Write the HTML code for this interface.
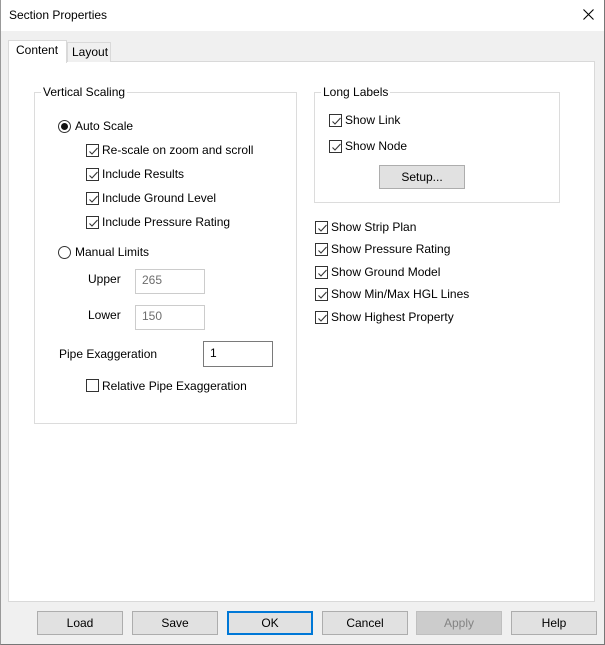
<!DOCTYPE html>
<html><head><style>
*{box-sizing:border-box}
body{margin:0;width:605px;height:645px;background:#f0f0f0;font-family:"Liberation Sans",sans-serif;font-size:12px;color:#000;position:relative;overflow:hidden}
.a{position:absolute;white-space:nowrap}
.win{position:absolute;left:0;top:0;width:605px;height:645px;border:1px solid #777;border-top:none;border-left:1px solid #999}
.title{position:absolute;left:0;top:0;width:604px;height:31px;background:#fff}
.panel{position:absolute;left:8px;top:61px;width:587px;height:541px;background:#fff;border:1px solid #d9d9d9}
.grp{position:absolute;border:1px solid #dcdcdc}
.lg{position:absolute;background:#fff;padding:0 2px;top:-8px;left:6px}
.cb{position:absolute;width:13px;height:13px;border:1px solid #333;background:#fff}
.cb svg{position:absolute;left:1px;top:1px}
.rb{position:absolute;width:13px;height:13px;border:1px solid #333;border-radius:50%;background:#fff}
.in{position:absolute;border:1px solid #ccc;background:#fff;color:#6d6d6d;padding:3px 0 0 6px}
.btn{position:absolute;top:611px;width:86px;height:24px;background:#e1e1e1;border:1px solid #adadad;text-align:center;line-height:22px}
</style></head><body>
<div class="title"></div>
<div class="a" style="left:9px;top:8px">Section Properties</div>
<svg class="a" style="left:583px;top:9px" width="11" height="11"><path d="M0.5 0.5L10.5 10.5M10.5 0.5L0.5 10.5" stroke="#000" stroke-width="1.1"/></svg>
<div class="win"></div>
<div class="panel"></div>
<div class="a" style="left:67px;top:42px;width:44px;height:20px;background:#f0f0f0;border:1px solid #d9d9d9;border-bottom:none"></div>
<div class="a" style="left:72px;top:45px">Layout</div>
<div class="a" style="left:8px;top:40px;width:59px;height:23px;background:#fff;border:1px solid #d9d9d9;border-bottom:none"></div>
<div class="a" style="left:16px;top:43px">Content</div>

<div class="grp" style="left:34px;top:92px;width:263px;height:332px"><span class="lg">Vertical Scaling</span></div>
<div class="rb" style="left:58px;top:120px"><div style="position:absolute;left:2px;top:2px;width:7px;height:7px;border-radius:50%;background:#111"></div></div>
<div class="a" style="left:75px;top:119px">Auto Scale</div>

<div class="cb" style="left:86px;top:144px"><svg width="11" height="11"><path d="M1.5 5.5L4 8L9.5 2" stroke="#333" fill="none" stroke-width="1.1"/></svg></div>
<div class="a" style="left:102px;top:143px">Re-scale on zoom and scroll</div>
<div class="cb" style="left:86px;top:168px"><svg width="11" height="11"><path d="M1.5 5.5L4 8L9.5 2" stroke="#333" fill="none" stroke-width="1.1"/></svg></div>
<div class="a" style="left:102px;top:167px">Include Results</div>
<div class="cb" style="left:86px;top:192px"><svg width="11" height="11"><path d="M1.5 5.5L4 8L9.5 2" stroke="#333" fill="none" stroke-width="1.1"/></svg></div>
<div class="a" style="left:102px;top:191px">Include Ground Level</div>
<div class="cb" style="left:86px;top:216px"><svg width="11" height="11"><path d="M1.5 5.5L4 8L9.5 2" stroke="#333" fill="none" stroke-width="1.1"/></svg></div>
<div class="a" style="left:102px;top:215px">Include Pressure Rating</div>

<div class="rb" style="left:58px;top:246px"></div>
<div class="a" style="left:75px;top:245px">Manual Limits</div>
<div class="a" style="left:88px;top:272px">Upper</div>
<div class="in" style="left:135px;top:269px;width:70px;height:25px">265</div>
<div class="a" style="left:88px;top:308px">Lower</div>
<div class="in" style="left:135px;top:305px;width:70px;height:25px">150</div>
<div class="a" style="left:59px;top:347px">Pipe Exaggeration</div>
<div class="in" style="left:203px;top:341px;width:70px;height:26px;border-color:#7a7a7a;color:#000;padding-top:4px">1</div>
<div class="cb" style="left:86px;top:379px"></div>
<div class="a" style="left:102px;top:379px">Relative Pipe Exaggeration</div>

<div class="grp" style="left:314px;top:92px;width:246px;height:111px"><span class="lg">Long Labels</span></div>
<div class="cb" style="left:329px;top:114px"><svg width="11" height="11"><path d="M1.5 5.5L4 8L9.5 2" stroke="#333" fill="none" stroke-width="1.1"/></svg></div>
<div class="a" style="left:345px;top:113px">Show Link</div>
<div class="cb" style="left:329px;top:140px"><svg width="11" height="11"><path d="M1.5 5.5L4 8L9.5 2" stroke="#333" fill="none" stroke-width="1.1"/></svg></div>
<div class="a" style="left:345px;top:139px">Show Node</div>
<div class="a" style="left:379px;top:165px;width:86px;height:24px;background:#e1e1e1;border:1px solid #adadad;text-align:center;line-height:22px">Setup...</div>

<div class="cb" style="left:315px;top:221px"><svg width="11" height="11"><path d="M1.5 5.5L4 8L9.5 2" stroke="#333" fill="none" stroke-width="1.1"/></svg></div>
<div class="a" style="left:331px;top:220px">Show Strip Plan</div>
<div class="cb" style="left:315px;top:243px"><svg width="11" height="11"><path d="M1.5 5.5L4 8L9.5 2" stroke="#333" fill="none" stroke-width="1.1"/></svg></div>
<div class="a" style="left:331px;top:242px">Show Pressure Rating</div>
<div class="cb" style="left:315px;top:266px"><svg width="11" height="11"><path d="M1.5 5.5L4 8L9.5 2" stroke="#333" fill="none" stroke-width="1.1"/></svg></div>
<div class="a" style="left:331px;top:265px">Show Ground Model</div>
<div class="cb" style="left:315px;top:288px"><svg width="11" height="11"><path d="M1.5 5.5L4 8L9.5 2" stroke="#333" fill="none" stroke-width="1.1"/></svg></div>
<div class="a" style="left:331px;top:287px">Show Min/Max HGL Lines</div>
<div class="cb" style="left:315px;top:311px"><svg width="11" height="11"><path d="M1.5 5.5L4 8L9.5 2" stroke="#333" fill="none" stroke-width="1.1"/></svg></div>
<div class="a" style="left:331px;top:310px">Show Highest Property</div>

<div class="btn" style="left:37px">Load</div>
<div class="btn" style="left:132px">Save</div>
<div class="btn" style="left:227px;border:2px solid #0078d7;line-height:20px">OK</div>
<div class="btn" style="left:322px">Cancel</div>
<div class="btn" style="left:416px;background:#ccc;border-color:#bfbfbf;color:#838383">Apply</div>
<div class="btn" style="left:511px">Help</div>
</body></html>
